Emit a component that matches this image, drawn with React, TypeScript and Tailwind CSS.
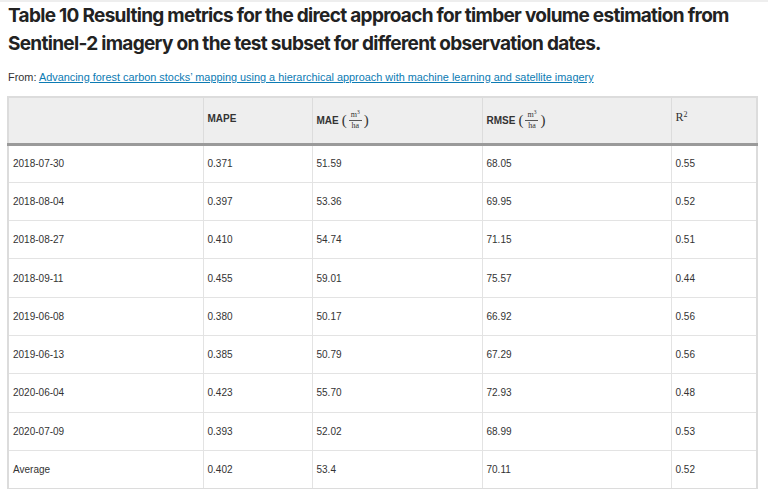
const ROWS: [string, string, string, string, string][] = [
  ["2018-07-30", "0.371", "51.59", "68.05", "0.55"],
  ["2018-08-04", "0.397", "53.36", "69.95", "0.52"],
  ["2018-08-27", "0.410", "54.74", "71.15", "0.51"],
  ["2018-09-11", "0.455", "59.01", "75.57", "0.44"],
  ["2019-06-08", "0.380", "50.17", "66.92", "0.56"],
  ["2019-06-13", "0.385", "50.79", "67.29", "0.56"],
  ["2020-06-04", "0.423", "55.70", "72.93", "0.48"],
  ["2020-07-09", "0.393", "52.02", "68.99", "0.53"],
  ["Average", "0.402", "53.4", "70.11", "0.52"],
];

const WIDTHS = ["w-[195px]", "w-[109px]", "w-[170px]", "w-[189px]", "w-[86px]"];

function Unit() {
  return (
    <span className="ml-[3px] inline-flex items-center font-['Liberation_Serif',serif] font-normal text-[#333]">
      <span className="text-[15px] leading-none">(</span>
      <span className="mx-[2px] inline-flex flex-col items-center leading-none">
        <span className="text-[8px] leading-[8px]">
          m<sup className="text-[5.5px]">3</sup>
        </span>
        <span className="my-[1px] h-px w-[13px] bg-[#555]" />
        <span className="text-[8px] leading-[8px]">ha</span>
      </span>
      <span className="text-[15px] leading-none">)</span>
    </span>
  );
}

export default function App() {
  return (
    <div className="min-h-[489px] bg-white font-['Liberation_Sans',Arial,sans-serif] text-[#333]">
      <div className="h-[2px] bg-[#eeeeee]" />
      <div className="px-2">
        <h1 className="font-['Inter','Liberation_Sans',sans-serif] text-[19px] font-bold leading-[28px] tracking-[-0.7px] text-[#222]">
          Table 10 Resulting metrics for the direct approach for timber volume estimation from Sentinel-2 imagery on the test subset for different observation dates.
        </h1>
        <p className="mt-[11px] text-[10.9px] leading-4 text-[#333]">
          From:{" "}
          <a href="#" className="text-[#0c7bb3] underline">
            Advancing forest carbon stocks’ mapping using a hierarchical approach with machine learning and satellite imagery
          </a>
        </p>
        <table className="mt-[11px] w-[751px] -ml-px table-fixed border-collapse border-2 border-[#dcdcdc] text-[10px]">
          <thead>
            <tr className="h-[47px] border-b-[3px] border-[#9a9a9a] bg-[#eeeeee]">
              <th className={`${WIDTHS[0]} border-r border-[#dcdcdc]`} />
              <th className={`${WIDTHS[1]} border-r border-[#dcdcdc] px-[4px] pt-[13px] align-top text-left font-bold`}>
                MAPE
              </th>
              <th className={`${WIDTHS[2]} border-r border-[#dcdcdc] px-[4px] text-left font-bold`}>
                <span className="inline-flex items-center">
                  MAE
                  <Unit />
                </span>
              </th>
              <th className={`${WIDTHS[3]} border-r border-[#dcdcdc] px-[4px] text-left font-bold`}>
                <span className="inline-flex items-center">
                  RMSE
                  <Unit />
                </span>
              </th>
              <th className={`${WIDTHS[4]} px-[4px] pt-[10px] align-top text-left font-['Liberation_Serif',serif] text-[12px] font-normal`}>
                R<sup className="text-[8px]">2</sup>
              </th>
            </tr>
          </thead>
          <tbody>
            {ROWS.map((row) => (
              <tr key={row[0]} className="h-[38.3px] border-b border-[#e3e3e3] last:border-b-0">
                {row.map((cell, i) => (
                  <td key={i} className={`${i < 4 ? "border-r border-[#e3e3e3]" : ""} px-[4px] align-middle`}>
                    {cell}
                  </td>
                ))}
              </tr>
            ))}
          </tbody>
        </table>
      </div>
    </div>
  );
}
